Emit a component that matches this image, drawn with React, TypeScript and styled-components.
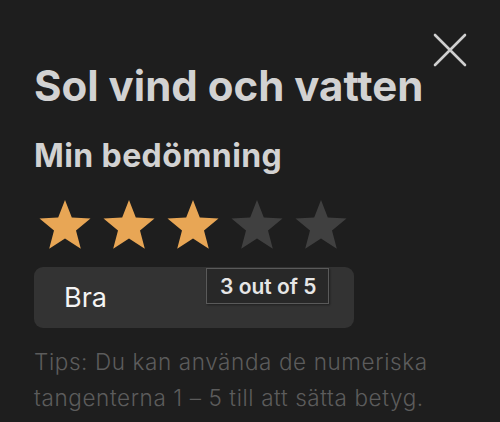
import React from "react";
import styled, { createGlobalStyle } from "styled-components";

const GlobalStyle = createGlobalStyle`
  html, body {
    margin: 0;
    padding: 0;
    background: #1e1e1e;
  }
  body {
    font-family: Inter, "Noto Sans", sans-serif;
  }
`;

const Dialog = styled.div`
  position: relative;
  width: 500px;
  height: 422px;
  box-sizing: border-box;
  padding: 56px 34px 0 34px;
  background: #1e1e1e;
  overflow: hidden;
`;

const CloseButton = styled.button`
  position: absolute;
  top: 32px;
  right: 32px;
  width: 36px;
  height: 36px;
  padding: 0;
  border: none;
  background: transparent;
  display: flex;
  align-items: center;
  justify-content: center;
  cursor: pointer;
`;

const Title = styled.h1`
  margin: 0;
  font-size: 42px;
  font-weight: 700;
  line-height: 60px;
  color: #d2d2d2;
`;

const Subtitle = styled.h2`
  margin: 20px 0 0 0;
  font-size: 32px;
  font-weight: 700;
  letter-spacing: 0.4px;
  line-height: 40px;
  color: #d2d2d2;
`;

const Stars = styled.div`
  display: flex;
  gap: 10px;
  margin: 23px 0 0 4px;
`;

const Star = styled.svg<{ $on: boolean }>`
  width: 54px;
  height: 52px;
  fill: ${(p) => (p.$on ? "#e8a655" : "#404040")};
`;

const RatingBox = styled.div`
  position: relative;
  margin-top: 16px;
  width: 320px;
  height: 61px;
  box-sizing: border-box;
  padding-left: 30px;
  display: flex;
  align-items: center;
  background: #333333;
  border-radius: 9px;
`;

const RatingLabel = styled.span`
  font-size: 27px;
  font-weight: 400;
  color: #f4f4f4;
`;

const Tooltip = styled.div`
  position: absolute;
  left: 172px;
  top: 1px;
  height: 36px;
  box-sizing: border-box;
  padding: 0 12px 0 13px;
  display: flex;
  align-items: center;
  background: #282828;
  border: 1px solid #5a5a5a;
  box-shadow: 1px 1px 2px rgba(0, 0, 0, 0.4);
  font-size: 21px;
  font-weight: 600;
  color: #e6e6e6;
`;

const Tips = styled.p`
  margin: 16px 0 0 0;
  font-size: 22.5px;
  font-weight: 300;
  letter-spacing: 0.6px;
  line-height: 36px;
  color: #5c5c5c;
`;

const STAR_PATH =
  "M27 1 L33.8 18.5 L52.5 19.6 L38 31.6 L42.8 49.8 L27 39.6 L11.2 49.8 L16 31.6 L1.5 19.6 L20.2 18.5 Z";

export default function App() {
  const rating = 3;
  return (
    <>
      <GlobalStyle />
      <Dialog>
        <CloseButton aria-label="Stäng">
          <svg width="34" height="34" viewBox="0 0 34 34">
            <path
              d="M2 2 L32 32 M32 2 L2 32"
              stroke="#cfcfcf"
              strokeWidth="2.6"
              strokeLinecap="round"
            />
          </svg>
        </CloseButton>
        <Title>Sol vind och vatten</Title>
        <Subtitle>Min bedömning</Subtitle>
        <Stars>
          {[1, 2, 3, 4, 5].map((n) => (
            <Star key={n} $on={n <= rating} viewBox="0 0 54 52">
              <path d={STAR_PATH} />
            </Star>
          ))}
        </Stars>
        <RatingBox>
          <RatingLabel>Bra</RatingLabel>
          <Tooltip>3 out of 5</Tooltip>
        </RatingBox>
        <Tips>
          Tips: Du kan använda de numeriska tangenterna 1 – 5 till att sätta
          betyg.
        </Tips>
      </Dialog>
    </>
  );
}
